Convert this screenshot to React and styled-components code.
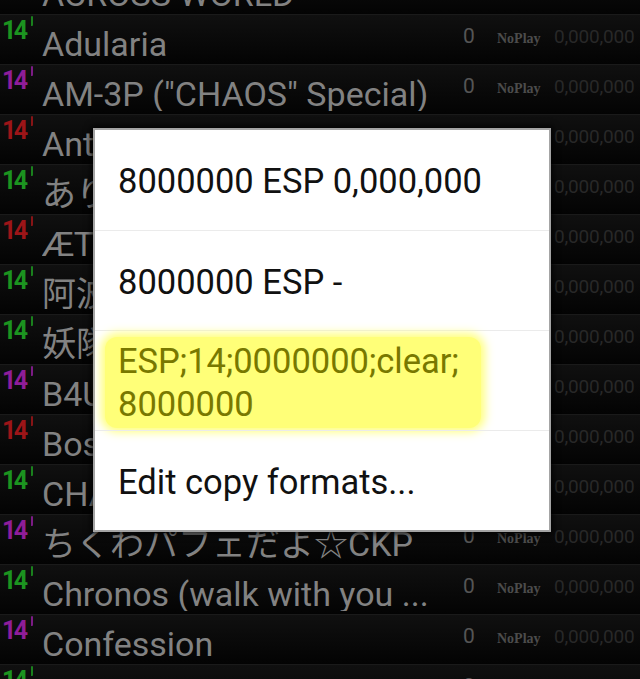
import React from "react";
import styled, { createGlobalStyle } from "styled-components";

const Global = createGlobalStyle`
  html, body { margin: 0; padding: 0; background: #000; overflow: hidden; }
  #root { width: 640px; height: 679px; overflow: hidden; position: relative; }
`;

const LEVEL_COLORS = { g: "#1c9420", r: "#9c1518", p: "#8f1d9a" };

const songs = [
  { lv: "g", title: "ACROSS WORLD" },
  { lv: "g", title: "Adularia" },
  { lv: "p", title: "AM-3P (\"CHAOS\" Special)" },
  { lv: "r", title: "Antagonism" },
  { lv: "g", title: "ありふれたせかいせいふく" },
  { lv: "r", title: "ÆTHER STRIKE" },
  { lv: "g", title: "阿波おどり -Awaodori-" },
  { lv: "g", title: "妖隊の行進" },
  { lv: "p", title: "B4U" },
  { lv: "r", title: "Boss Rush" },
  { lv: "g", title: "CHAOS" },
  { lv: "p", title: "ちくわパフェだよ☆CKP" },
  { lv: "g", title: "Chronos (walk with you ..." },
  { lv: "p", title: "Confession" },
  { lv: "g", title: "Contrapasso" },
];

const Screen = styled.div`
  width: 640px;
  height: 679px;
  overflow: hidden;
  background: #000;
  font-family: Roboto, "Noto Sans CJK JP", sans-serif;
`;

const List = styled.div`
  display: flex;
  flex-direction: column;
  margin-top: -36px;
`;

const Row = styled.div`
  height: 49px;
  border-top: 1px solid #1a1a1a;
  background: linear-gradient(#101010, #030303);
  display: grid;
  grid-template-columns: 42px 388px 67px 57px 86px;
  align-items: start;
  overflow: hidden;
`;

const Level = styled.div`
  display: flex;
  align-items: flex-start;
  padding-left: 2px;
  color: ${(p) => p.$color};
`;

const LevelNum = styled.span`
  font-family: Roboto, sans-serif;
  font-weight: 700;
  font-size: 25px;
  line-height: 1;
  letter-spacing: -2.5px;
  padding-top: 3px;
`;

const Tick = styled.span`
  width: 2.5px;
  height: 10px;
  margin-left: 5px;
  margin-top: 1px;
  border-radius: 1px 1px 1px 0;
  background: ${(p) => p.$color};
  opacity: 0.85;
`;

const Title = styled.div`
  font-size: 34px;
  line-height: 1;
  padding-top: 12px;
  color: #828282;
  white-space: nowrap;
  overflow: hidden;
`;

const Count = styled.div`
  font-size: 21px;
  line-height: 1;
  padding-top: 11px;
  padding-left: 33px;
  color: #555;
`;

const Status = styled.div`
  font-family: "Liberation Serif", serif;
  font-weight: 700;
  font-size: 14px;
  line-height: 1;
  padding-top: 17px;
  color: #4c4c4c;
`;

const Score = styled.div`
  font-size: 19px;
  line-height: 1;
  padding-top: 12px;
  letter-spacing: -0.2px;
  color: #282828;
  white-space: nowrap;
`;

const Dialog = styled.div`
  position: absolute;
  left: 93px;
  top: 128px;
  width: 454px;
  border: 2px solid #a4a4a4;
  background: #fff;
  box-shadow: 0 0 6px 2px rgba(0, 0, 0, 0.8);
  display: flex;
  flex-direction: column;
`;

const Item = styled.div`
  height: 100px;
  box-sizing: border-box;
  display: flex;
  align-items: center;
  padding: 3px 23px 0;
  font-size: 34.5px;
  line-height: 43px;
  color: #111;
  & + & { border-top: 1px solid #ebebeb; }
`;

const Highlight = styled.div`
  margin-left: -13px;
  padding: 3px 22px 2px 13px;
  background: #ffff78;
  border-radius: 12px;
  box-shadow: 0 0 10px 4px #ffff7c;
  color: #787800;
`;

export default function App() {
  return (
    <Screen>
      <Global />
      <List>
        {songs.map((s, i) => (
          <Row key={i}>
            <Level $color={LEVEL_COLORS[s.lv]}>
              <LevelNum>14</LevelNum>
              <Tick $color={LEVEL_COLORS[s.lv]} />
            </Level>
            <Title>{s.title}</Title>
            <Count>0</Count>
            <Status>NoPlay</Status>
            <Score>0,000,000</Score>
          </Row>
        ))}
      </List>
      <Dialog>
        <Item>8000000 ESP 0,000,000</Item>
        <Item>8000000 ESP -</Item>
        <Item>
          <Highlight>
            ESP;14;0000000;clear;
            <br />
            8000000
          </Highlight>
        </Item>
        <Item>Edit copy formats...</Item>
      </Dialog>
    </Screen>
  );
}
